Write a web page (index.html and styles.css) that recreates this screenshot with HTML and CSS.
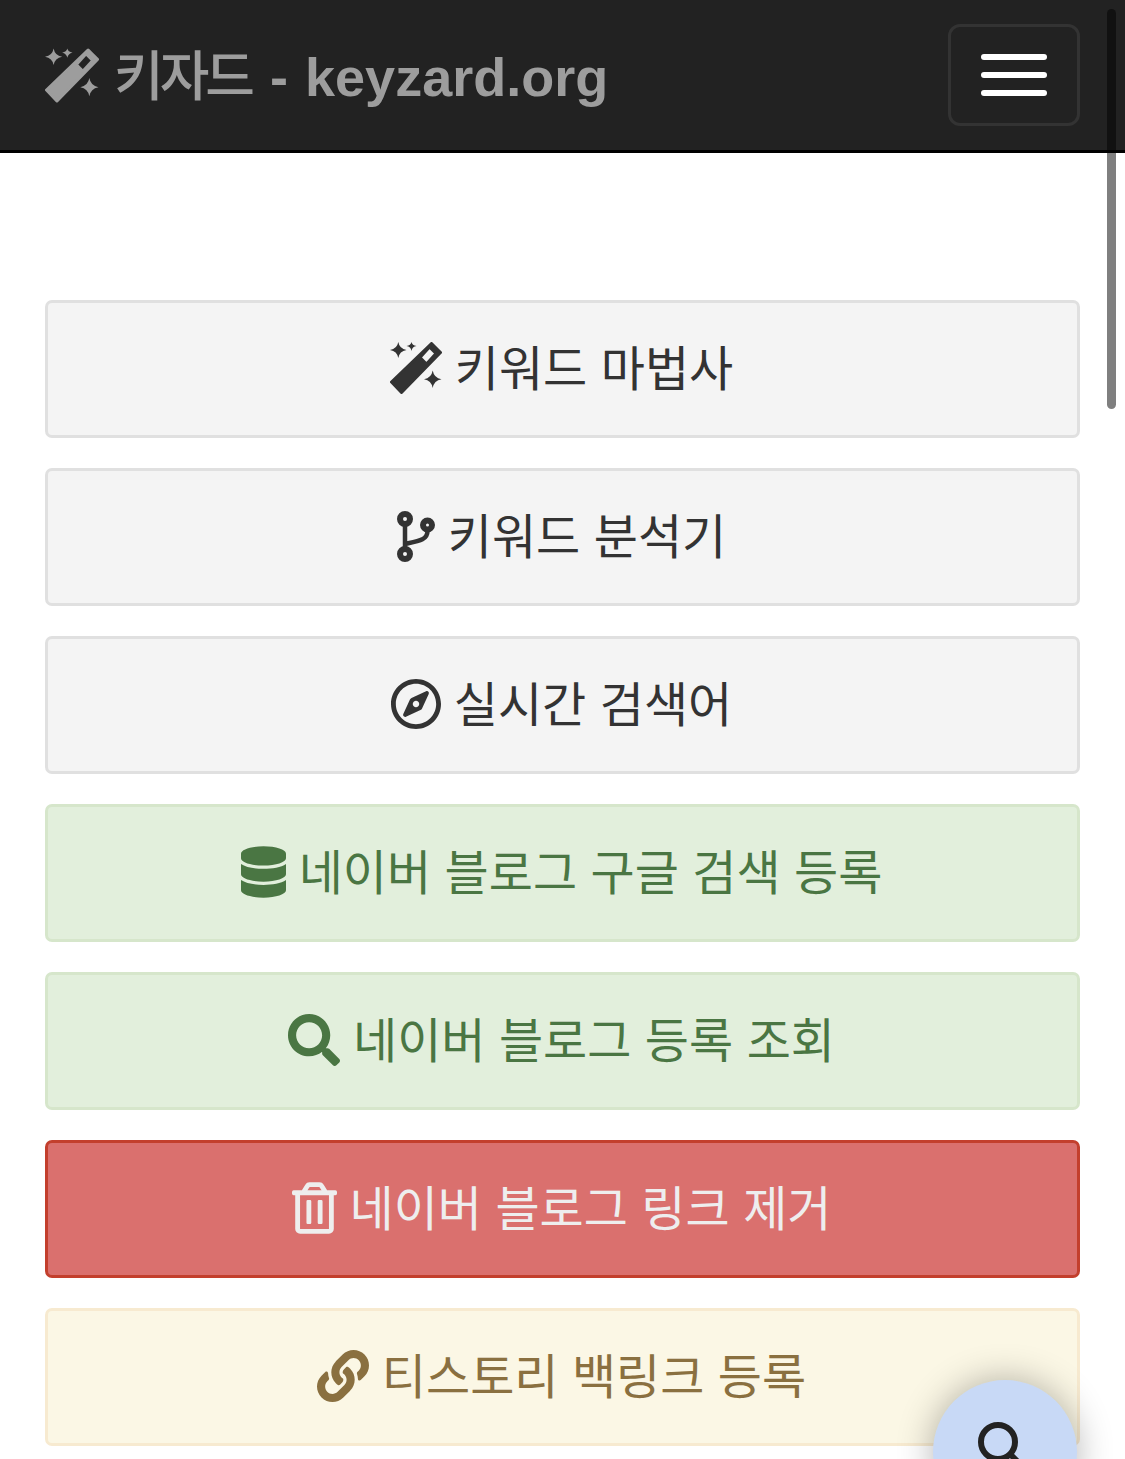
FILE: index.html
```html
<!DOCTYPE html>
<html lang="ko">
<head>
    <meta charset="UTF-8">
    <meta name="viewport" content="width=device-width, initial-scale=1.0">
    <title>키자드 - keyzard.org</title>
    <link rel="stylesheet" href="styles.css">
</head>
<body>
    <svg class="icon-defs" width="0" height="0">
        <symbol id="icon-wand" viewBox="0 0 52 52">
            <path fill-rule="evenodd" stroke="currentColor" stroke-width="3" stroke-linejoin="round" d="M41.500 1.500 50.500 10.500 11.500 50.500 1.500 40ZM30 15.500 39.500 5 46 11.500 36.500 22Z"/>
            <path d="M8.300 0Q9.500 6.800 16.500 8 9.500 9.200 8.300 16 7.100 9.200 0 8 7.100 6.800 8.300 0Z"/>
            <path d="M21.500 0Q22.200 3.300 26.500 4 22.200 4.700 21.500 9 20.800 4.700 16.500 4 20.800 3.300 21.500 0Z"/>
            <path d="M42.700 28.500Q44 36 51.500 37.300 44 38.600 42.700 46 41.400 38.600 34 37.300 41.400 36 42.700 28.500Z"/>
        </symbol>
    </svg>

    <nav class="navbar">
        <a class="brand" href="#">
            <svg class="brand-icon"><use href="#icon-wand"/></svg>
            <span class="brand-ko">키자드</span>
            <span class="brand-en">- keyzard.org</span>
        </a>
        <button class="toggler" type="button" aria-label="메뉴">
            <span class="toggler-bar"></span>
            <span class="toggler-bar"></span>
            <span class="toggler-bar"></span>
        </button>
    </nav>

    <main class="menu">
        <a class="btn btn-default" href="#">
            <svg class="btn-icon icon-wand"><use href="#icon-wand"/></svg>
            <span class="btn-label">키워드 마법사</span>
        </a>
        <a class="btn btn-default" href="#">
            <svg class="btn-icon icon-fork" viewBox="0 0 38 51" stroke="currentColor">
                <circle cx="8" cy="8" r="5" stroke-width="6"/>
                <circle cx="8" cy="43" r="5" stroke-width="6"/>
                <circle cx="30.500" cy="14" r="4.500" stroke-width="6"/>
                <path stroke-width="4.500" d="M8 14V37M30.500 20C30.500 29 22 30 8 33"/>
            </svg>
            <span class="btn-label">키워드 분석기</span>
        </a>
        <a class="btn btn-default" href="#">
            <svg class="btn-icon icon-compass" viewBox="0 0 496 512"><path d="M347.940 129.860L203.600 195.830a31.938 31.938 0 0 0-15.770 15.770l-65.970 144.340c-7.610 16.650 9.540 33.810 26.200 26.200l144.340-65.970a31.938 31.938 0 0 0 15.770-15.770l65.970-144.340c7.610-16.660-9.540-33.810-26.200-26.200zm-77.360 148.720c-12.470 12.470-32.690 12.470-45.160 0-12.470-12.470-12.470-32.690 0-45.160 12.470-12.470 32.690-12.470 45.160 0 12.470 12.470 12.470 32.690 0 45.160zM248 8C111.030 8 0 119.030 0 256s111.030 248 248 248 248-111.030 248-248S384.970 8 248 8zm0 448c-110.280 0-200-89.720-200-200S137.720 56 248 56s200 89.720 200 200-89.720 200-200 200z"/></svg>
            <span class="btn-label">실시간 검색어</span>
        </a>
        <a class="btn btn-success" href="#">
            <svg class="btn-icon icon-database" viewBox="0 0 448 512"><path d="M448 73.143v45.714C448 159.143 347.667 192 224 192S0 159.143 0 118.857V73.143C0 32.857 100.333 0 224 0s224 32.857 224 73.143zM448 176v102.857C448 319.143 347.667 352 224 352S0 319.143 0 278.857V176c48.125 33.143 136.208 48.572 224 48.572S399.874 209.143 448 176zm0 160v102.857C448 479.143 347.667 512 224 512S0 479.143 0 438.857V336c48.125 33.143 136.208 48.572 224 48.572S399.874 369.143 448 336z"/></svg>
            <span class="btn-label">네이버 블로그 구글 검색 등록</span>
        </a>
        <a class="btn btn-success" href="#">
            <svg class="btn-icon icon-search" viewBox="0 0 512 512"><path d="M505 442.700L405.300 343c-4.500-4.500-10.600-7-17-7H372c27.600-35.300 44-79.700 44-128C416 93.100 322.900 0 208 0S0 93.100 0 208s93.100 208 208 208c48.300 0 92.700-16.400 128-44v16.300c0 6.400 2.500 12.500 7 17l99.700 99.700c9.400 9.400 24.600 9.400 33.900 0l28.300-28.300c9.400-9.400 9.400-24.600.1-34zM208 336c-70.700 0-128-57.200-128-128 0-70.700 57.200-128 128-128 70.700 0 128 57.200 128 128 0 70.700-57.200 128-128 128z"/></svg>
            <span class="btn-label">네이버 블로그 등록 조회</span>
        </a>
        <a class="btn btn-danger" href="#">
            <svg class="btn-icon icon-trash" viewBox="0 0 448 512"><path d="M268 416h24a12 12 0 0 0 12-12V188a12 12 0 0 0-12-12h-24a12 12 0 0 0-12 12v216a12 12 0 0 0 12 12zM432 80h-82.410l-34-56.700A48 48 0 0 0 274.410 0H173.590a48 48 0 0 0-41.160 23.300L98.410 80H16A16 16 0 0 0 0 96v16a16 16 0 0 0 16 16h16v336a48 48 0 0 0 48 48h288a48 48 0 0 0 48-48V128h16a16 16 0 0 0 16-16V96a16 16 0 0 0-16-16zM171.840 50.910A6 6 0 0 1 177 48h94a6 6 0 0 1 5.150 2.910L293.610 80H154.390zM368 464H80V128h288zm-212-48h24a12 12 0 0 0 12-12V188a12 12 0 0 0-12-12h-24a12 12 0 0 0-12 12v216a12 12 0 0 0 12 12z"/></svg>
            <span class="btn-label">네이버 블로그 링크 제거</span>
        </a>
        <a class="btn btn-warning" href="#">
            <svg class="btn-icon icon-link" viewBox="0 0 512 512"><path d="M326.612 185.391c59.747 59.809 58.927 155.698.36 214.590-.11.120-.24.250-.36.370l-67.200 67.200c-59.270 59.270-155.699 59.262-214.960 0-59.270-59.260-59.270-155.700 0-214.960l37.106-37.106c9.840-9.840 26.786-3.300 27.294 10.606.648 17.722 3.826 35.527 9.690 52.721 1.986 5.822.567 12.262-3.783 16.612l-13.087 13.087c-28.026 28.026-28.905 73.660-1.155 101.960 28.024 28.579 74.086 28.749 102.325.510l67.200-67.190c28.191-28.191 28.073-73.757 0-101.830-3.701-3.694-7.429-6.564-10.341-8.569a16.037 16.037 0 0 1-6.947-12.606c-.396-10.567 3.348-21.456 11.698-29.806l21.054-21.055c5.521-5.521 14.182-6.199 20.584-1.731a152.482 152.482 0 0 1 20.522 17.197zM467.547 44.449c-59.261-59.262-155.690-59.270-214.960 0l-67.200 67.200c-.12.120-.25.250-.36.370-58.566 58.892-59.387 154.781.36 214.590a152.454 152.454 0 0 0 20.521 17.196c6.402 4.468 15.064 3.789 20.584-1.731l21.054-21.055c8.350-8.350 12.094-19.239 11.698-29.806a16.037 16.037 0 0 0-6.947-12.606c-2.912-2.005-6.640-4.875-10.341-8.569-28.073-28.073-28.191-73.639 0-101.830l67.200-67.190c28.239-28.239 74.300-28.069 102.325.510 27.750 28.300 26.872 73.934-1.155 101.960l-13.087 13.087c-4.350 4.350-5.769 10.790-3.783 16.612 5.864 17.194 9.042 34.999 9.690 52.721.509 13.906 17.454 20.446 27.294 10.606l37.106-37.106c59.271-59.259 59.271-155.699.001-214.959z"/></svg>
            <span class="btn-label">티스토리 백링크 등록</span>
        </a>
    </main>

    <div class="scrollbar"></div>
    <button class="fab" type="button" aria-label="검색">
        <svg class="fab-icon" viewBox="0 0 54 54">
            <circle cx="20" cy="20" r="17"/>
            <path d="M33 33 50 50"/>
        </svg>
    </button>
</body>
</html>
```

FILE: styles.css
```css
html, body {
    height: 100%;
    overflow: hidden;
}

body {
    margin: 0;
    background-color: #fff;
    font-family: "Liberation Sans", "Noto Sans CJK KR", sans-serif;
}

.icon-defs {
    position: absolute;
}

.navbar {
    display: flex;
    justify-content: space-between;
    align-items: center;
    height: 150px;
    padding: 0 45px;
    background: #222;
    border-bottom: 3px solid #000;
}

.brand {
    display: flex;
    align-items: center;
    color: #9d9d9d;
    font-size: 54px;
    font-weight: 700;
    text-decoration: none;
}

.brand-icon {
    width: 54px;
    height: 55px;
    margin-right: 15px;
    fill: currentColor;
}

.brand-ko {
    font-family: "Noto Sans CJK KR", sans-serif;
    font-weight: 500;
    letter-spacing: -4px;
    margin-top: -5px;
    margin-right: 19px;
}

.brand-en {
    margin-top: 4px;
    word-spacing: 2px;
}

.toggler {
    display: flex;
    flex-direction: column;
    align-items: center;
    gap: 12px;
    width: 132px;
    height: 102px;
    padding: 27px 0;
    background: transparent;
    border: 3px solid #333;
    border-radius: 12px;
}

.toggler-bar {
    width: 66px;
    height: 6px;
    border-radius: 3px;
    background: #fff;
}

.menu {
    display: flex;
    flex-direction: column;
    gap: 30px;
    padding: 147px 45px 0;
}

.btn {
    display: flex;
    justify-content: center;
    align-items: center;
    gap: 13px;
    height: 138px;
    box-sizing: border-box;
    padding-right: 2px;
    border: 3px solid;
    border-radius: 7px;
    font-family: "Noto Sans CJK KR", sans-serif;
    font-size: 48px;
    font-weight: 400;
    text-decoration: none;
}

.btn-label {
    margin-top: -8px;
}

.btn-default {
    background: #f4f4f4;
    border-color: #e0e0e0;
    color: #333;
}

.btn-success {
    background: #e2efdc;
    border-color: #d6e6cb;
    color: #4a7643;
}

.btn-danger {
    background: #da706e;
    border-color: #c33f2d;
    color: #eee;
}

.btn-warning {
    background: #fbf7e5;
    border-color: #f7ead0;
    color: #8a7040;
}

.btn-icon {
    flex: none;
    margin-top: -2px;
    fill: currentColor;
}

.icon-wand { width: 52px; height: 52px; }
.icon-fork { width: 38px; height: 51px; fill: none; }
.icon-compass { width: 50px; height: 52px; }
.icon-database { width: 45px; height: 52px; }
.icon-search { width: 52px; height: 52px; }
.icon-trash { width: 45px; height: 52px; }
.icon-link { width: 52px; height: 52px; }

.scrollbar {
    position: fixed;
    top: 9px;
    left: 1107px;
    width: 9px;
    height: 400px;
    border-radius: 5px;
    background: rgba(0, 0, 0, 0.5);
}

.fab {
    position: fixed;
    top: 1380px;
    left: 933px;
    width: 144px;
    height: 144px;
    padding: 0;
    border: none;
    border-radius: 50%;
    background: #c8d9f6;
    box-shadow: 0 0 36px rgba(0, 0, 0, 0.3);
}

.fab-icon {
    position: absolute;
    top: 42px;
    left: 45px;
    width: 54px;
    height: 54px;
    fill: none;
    stroke: #222;
    stroke-width: 6;
}
```
